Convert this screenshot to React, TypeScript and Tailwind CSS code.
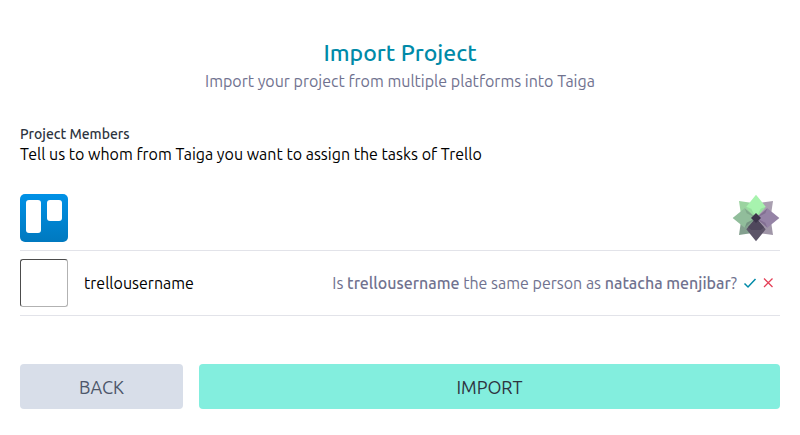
function TrelloLogo() {
  return (
    <svg viewBox="0 0 144 144" className="size-12" role="img" aria-label="Trello">
      <defs>
        <linearGradient id="trello-blue" x1="0" y1="0" x2="0" y2="1">
          <stop offset="0" stopColor="#0091e6" />
          <stop offset="1" stopColor="#0079bf" />
        </linearGradient>
      </defs>
      <rect width="144" height="144" rx="15" fill="url(#trello-blue)" />
      <rect x="18" y="18" width="45" height="99" rx="9" fill="#fff" />
      <rect x="81" y="18" width="45" height="63" rx="9" fill="#fff" />
    </svg>
  );
}

function TaigaLogo() {
  return (
    <svg viewBox="0 0 144 144" className="size-12" role="img" aria-label="Taiga">
      <path d="M21 21L62 27L72 72L27 62Z" fill="#9bd3a0" />
      <path d="M123 21L117 62L72 72L82 27Z" fill="#a99fb0" />
      <path d="M21 123L27 82L72 72L62 117Z" fill="#84a08f" />
      <path d="M123 123L82 117L72 72L117 82Z" fill="#a096a8" />
      <path d="M72 2L101 38L72 72L43 38Z" fill="#a7f3ae" />
      <path d="M142 72L106 101L72 72L106 43Z" fill="#9583a6" />
      <path d="M72 142L43 106L72 72L101 106Z" fill="#5c5468" />
      <path d="M2 72L38 43L72 72L38 101Z" fill="#91bd9b" />
      <path d="M43 38L58 44L72 72Z" fill="#96e09e" />
      <path d="M101 38L86 44L72 72Z" fill="#96e09e" />
      <path d="M106 43L100 58L72 72Z" fill="#826f92" />
      <path d="M106 101L100 86L72 72Z" fill="#826f92" />
      <path d="M38 43L44 58L72 72Z" fill="#80a98b" />
      <path d="M38 101L44 86L72 72Z" fill="#759482" />
      <path d="M72 72L96 100L86 108H58L48 100Z" fill="#4f475c" />
      <path d="M72 57L87 72L72 87L57 72Z" fill="#3c344a" />
    </svg>
  );
}

export default function App() {
  return (
    <main className="px-5 pt-[35px] pb-6 font-['Ubuntu','Noto_Sans',sans-serif] text-base text-black">
      <header className="text-center">
        <h1 className="text-[23px] leading-9 font-medium text-[#008aa8]">Import Project</h1>
        <p className="text-base leading-5 text-[#70728f]">
          Import your project from multiple platforms into Taiga
        </p>
      </header>

      <section className="mt-[33px]">
        <h2 className="text-sm leading-5 font-medium text-[#2e3440]">Project Members</h2>
        <p className="text-base leading-5">
          Tell us to whom from Taiga you want to assign the tasks of Trello
        </p>

        <div className="mt-[30px] flex items-center justify-between border-b border-[#e2e3e9] pb-2">
          <TrelloLogo />
          <TaigaLogo />
        </div>

        <div className="flex items-center border-b border-[#e2e3e9] py-2">
          <div className="size-12 shrink-0 rounded-[3px] border border-t-[#4c4c4c] border-r-[#b2b2b2] border-b-[#b2b2b2] border-l-[#4c4c4c]" />
          <span className="ml-4">trellousername</span>
          <div className="ml-auto flex items-center pr-[3px] text-[#70728f]">
            <p>
              Is <strong className="font-medium">trellousername</strong> the same person as{" "}
              <strong className="font-medium">natacha menjibar</strong>?
            </p>
            <button type="button" aria-label="Confirm" className="ml-1 p-0.5">
              <svg viewBox="0 0 14 14" className="size-3.5" fill="none" stroke="#008aa8" strokeWidth="1.5">
                <path d="M1.5 7.5L5 11L12.5 3" />
              </svg>
            </button>
            <button type="button" aria-label="Reject" className="p-0.5">
              <svg viewBox="0 0 14 14" className="size-3.5" fill="none" stroke="#e44057" strokeWidth="1.3">
                <path d="M3 2.5L11.5 11M11.5 2.5L3 11" />
              </svg>
            </button>
          </div>
        </div>
      </section>

      <div className="mt-12 flex gap-4 text-lg">
        <button type="button" className="h-[45px] w-[163px] rounded bg-[#d8dee9] text-[#4c566a]">
          BACK
        </button>
        <button type="button" className="h-[45px] flex-1 rounded bg-[#83eede] text-[#2e3440]">
          IMPORT
        </button>
      </div>
    </main>
  );
}
